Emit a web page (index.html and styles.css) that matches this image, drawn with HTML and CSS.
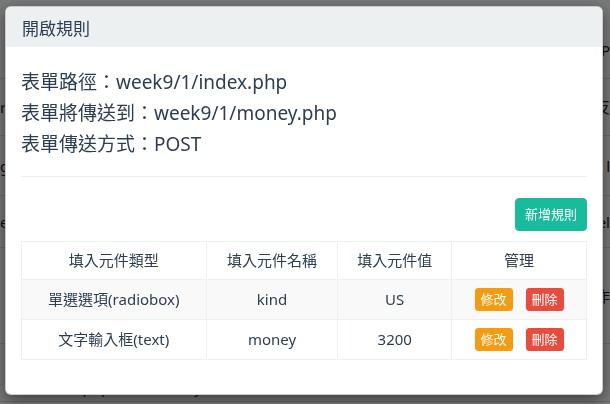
FILE: index.html
```html
<!DOCTYPE html>
<html lang="zh-Hant">
<head>
<meta charset="utf-8">
<title>開啟規則</title>
<link rel="stylesheet" href="styles.css">
</head>
<body>
<div class="page">
  <div class="bg-row r1"><span class="bl"></span><span class="br">P</span></div>
  <div class="bg-row r2"><span class="bl">r</span><span class="br">反</span></div>
  <div class="bg-row r3"><span class="bl">g</span><span class="br">l</span></div>
  <div class="bg-row r4"><span class="bl">e</span><span class="br">el</span></div>
  <div class="bg-row r5"><span class="bl"></span><span class="br">作</span></div>
  <div class="bg-row r6"><span class="bl">index.php</span><span class="bm">sendy</span><span class="br wide">回收填寫表單的資料</span></div>
</div>
<div class="backdrop"></div>
<div class="modal">
  <div class="modal-header">開啟規則</div>
  <div class="modal-body">
    <h4 class="info">表單路徑：week9/1/index.php</h4>
    <h4 class="info">表單將傳送到：week9/1/money.php</h4>
    <h4 class="info">表單傳送方式：POST</h4>
    <hr class="divider">
    <div class="actions"><button class="btn btn-success">新增規則</button></div>
    <table class="rules">
      <thead>
        <tr><th class="c1">填入元件類型</th><th class="c2">填入元件名稱</th><th class="c3">填入元件值</th><th class="c4">管理</th></tr>
      </thead>
      <tbody>
        <tr class="odd"><td>單選選項(radiobox)</td><td>kind</td><td>US</td><td><div class="ops"><button class="btn-xs warn">修改</button><button class="btn-xs danger">刪除</button></div></td></tr>
        <tr><td>文字輸入框(text)</td><td>money</td><td>3200</td><td><div class="ops"><button class="btn-xs warn">修改</button><button class="btn-xs danger">刪除</button></div></td></tr>
      </tbody>
    </table>
  </div>
</div>
</body>
</html>
```
FILE: styles.css
```css
* { box-sizing: border-box; }
html, body { margin: 0; padding: 0; }
body {
  width: 610px;
  height: 404px;
  overflow: hidden;
  background: #fff;
  font-family: "Noto Sans", "Noto Sans CJK TC", sans-serif;
  color: #2c3e50;
}
.page {
  display: flex;
  flex-direction: column;
  padding-top: 22px;
}
.bg-row {
  display: flex;
  align-items: center;
  justify-content: space-between;
  border-bottom: 1px solid #ddd;
  font-size: 15px;
  line-height: 20px;
  color: #222;
}
.r1 { height: 57px; }
.r2 { height: 57px; }
.r3 { height: 60px; }
.r4 { height: 52px; }
.r5 { height: 96px; }
.r6 { height: 58px; align-items: flex-end; padding: 0 0 4px 40px; }
.bl { text-align: left; }
.bm { margin-left: 50px; }
.br { text-align: right; }
.br.wide { margin-left: auto; margin-right: 30px; }

.backdrop {
  position: fixed;
  inset: 0;
  background: rgba(0, 0, 0, 0.52);
}
.modal {
  position: absolute;
  left: 5px;
  top: 6px;
  width: 598px;
  height: 389px;
  background: #fff;
  border: 1px solid rgba(0,0,0,0.2);
  border-radius: 6px;
  box-shadow: 0 5px 15px rgba(0,0,0,0.5);
  overflow: hidden;
}
.modal-header {
  height: 40px;
  background: #ecf0f1;
  display: flex;
  align-items: center;
  padding: 0 16px;
  font-size: 17px;
  color: #2c3e50;
}
.modal-body {
  padding: 15px;
}
.info {
  margin: 10px 0;
  font-size: 19px;
  font-weight: 400;
  line-height: 21px;
}
.divider {
  margin: 21px 0;
  border: 0;
  border-top: 1px solid #ecf0f1;
}
.actions {
  display: flex;
  justify-content: flex-end;
  margin-bottom: 10px;
}
.btn {
  font-family: inherit;
  font-size: 13px;
  line-height: 19px;
  padding: 6px 9px;
  border: 1px solid transparent;
  border-radius: 4px;
  color: #fff;
}
.btn-success { background: #18bc9c; border-color: #18bc9c; width: 72px; height: 33px; }
.rules {
  width: 566px;
  border-collapse: collapse;
  font-size: 15px;
  line-height: 21px;
}
.rules th, .rules td {
  border: 1px solid #ecf0f1;
  padding: 8px;
  text-align: center;
  vertical-align: middle;
  font-weight: 400;
}
.rules th { height: 38px; }
.rules td { height: 40px; padding: 7px 8px; }
.c1 { width: 185px; }
.c2 { width: 132px; }
.c3 { width: 114px; }
.c4 { width: 135px; }
.odd td { background: #f9f9f9; }
.ops {
  display: flex;
  justify-content: center;
  gap: 13px;
}
.btn-xs {
  font-family: inherit;
  font-size: 13px;
  line-height: 19px;
  padding: 1px 5px;
  width: 38px;
  height: 23px;
  border: 1px solid transparent;
  border-radius: 3px;
  color: #fff;
}
.warn { background: #f39c12; border-color: #f39c12; }
.danger { background: #e74c3c; border-color: #e74c3c; }
```
